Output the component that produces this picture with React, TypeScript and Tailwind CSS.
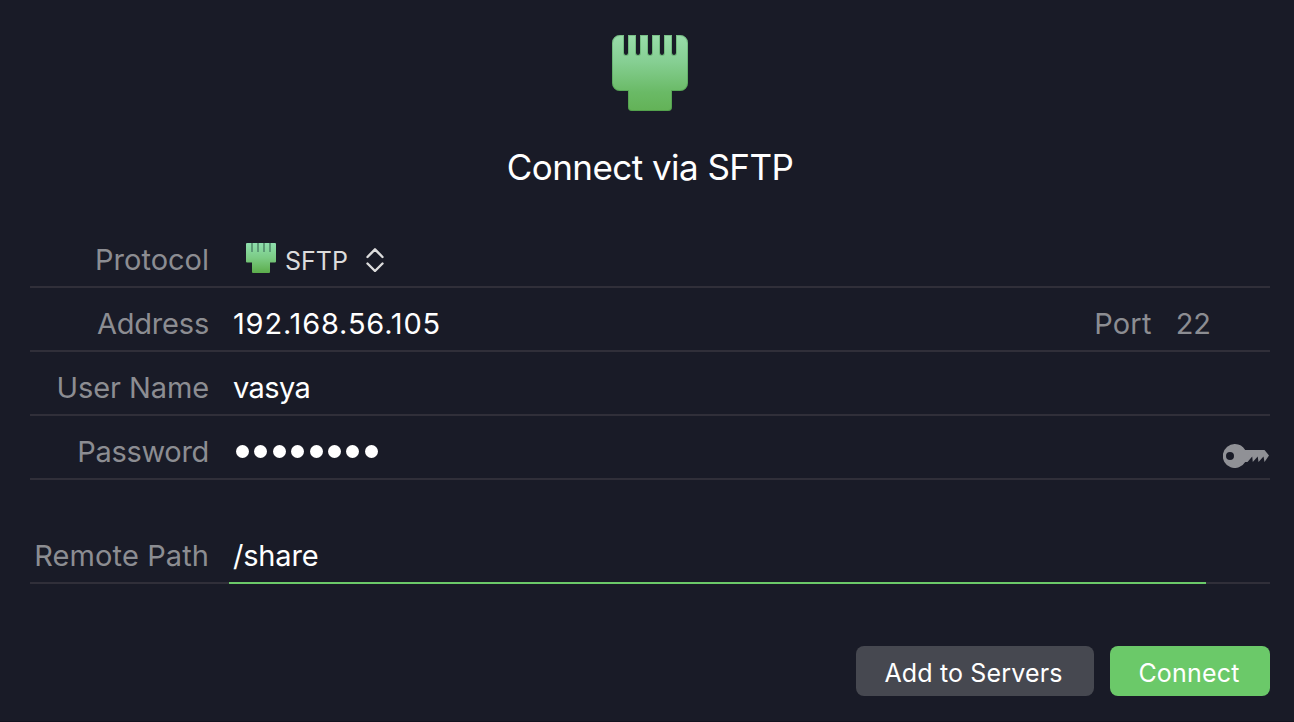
import type { ReactNode } from "react";

function Plug() {
  return (
    <svg className="h-[76px] w-[76px]" viewBox="0 0 76 76">
      <defs>
        <linearGradient id="plug" x1="0" y1="0" x2="0" y2="1">
          <stop offset="0" stopColor="#99dcaa" />
          <stop offset="0.35" stopColor="#86cf93" />
          <stop offset="0.75" stopColor="#6aba66" />
          <stop offset="1" stopColor="#63b257" />
        </linearGradient>
        <clipPath id="plugShape">
          <path id="plugPath" d="M8 0H12V18a2 2 0 0 0 4 0V0H24V18a2 2 0 0 0 4 0V0H36V18a2 2 0 0 0 4 0V0H48V18a2 2 0 0 0 4 0V0H60V18a2 2 0 0 0 4 0V0H68a8 8 0 0 1 8 8V48a8 8 0 0 1-8 8H60V72a4 4 0 0 1-4 4H20a4 4 0 0 1-4-4V56H8a8 8 0 0 1-8-8V8a8 8 0 0 1 8-8Z" />
        </clipPath>
      </defs>
      <g clipPath="url(#plugShape)">
        <rect width="76" height="76" fill="url(#plug)" />
        <use href="#plugPath" fill="none" stroke="#2d7a35" strokeOpacity="0.3" strokeWidth="2" />
      </g>
    </svg>
  );
}

function SmallPlug() {
  return (
    <svg className="-mt-1 h-[30px] w-[30px]" viewBox="0 0 30 30">
      <defs>
        <linearGradient id="smallPlug" x1="0" y1="0" x2="0" y2="1">
          <stop offset="0" stopColor="#8fdfae" />
          <stop offset="0.5" stopColor="#7bcb84" />
          <stop offset="1" stopColor="#5cad4b" />
        </linearGradient>
      </defs>
      <path d="M1 0H29a1 1 0 0 1 1 1V18.500a1 1 0 0 1-1 1H24V29a1 1 0 0 1-1 1H7a1 1 0 0 1-1-1V19.500H1a1 1 0 0 1-1-1V1a1 1 0 0 1 1-1Z" fill="url(#smallPlug)" />
      <path d="M6 0V9M12 0V9M18 0V9M24 0V9" stroke="#5c9b75" strokeWidth="2" />
    </svg>
  );
}

function KeyIcon() {
  return (
    <svg className="h-6 w-[46px]" viewBox="0 0 46 24">
      <path
        fill="#909196"
        fillRule="evenodd"
        d="M12 0a12 12 0 0 1 10.200 6H41.500L46 11.500L41.500 18L40.500 12.500L35.500 18L34.700 12.500L29.800 18L29.200 12.500L24.500 18H22.200A12 12 0 1 1 12 0ZM7 8a4 4 0 1 0 0 8a4 4 0 0 0 0-8Z"
      />
    </svg>
  );
}

function Row({ label, children }: { label: ReactNode; children: ReactNode }) {
  return (
    <div className="flex h-16 items-center border-b-2 border-[#302f39] pt-2.5">
      <div className="w-[179px] shrink-0 text-right text-[#8c8d92]">{label}</div>
      {children}
    </div>
  );
}

export default function App() {
  return (
    <div className="flex h-[722px] w-[1294px] flex-col border-b border-[#12131f] bg-[#191b27] pr-6 pl-[30px] font-['Inter',sans-serif] text-[29px] leading-[36px] whitespace-nowrap text-white">
      <header className="flex flex-col items-center pt-[35px]">
        <Plug />
        <h1 className="mt-9 text-[35px] leading-10 tracking-[-0.55px]">Connect via SFTP</h1>
      </header>

      <div className="mt-[37px]">
        <Row label={<span>Protocol</span>}>
          <div className="ml-[37px] flex items-center">
            <SmallPlug />
            <span className="ml-[9px] w-[63px] pt-0.5 text-[25px] text-[#dcdcdc]">SFTP</span>
            <svg className="ml-[18px] h-6 w-[18px]" viewBox="0 0 18 24" fill="none" stroke="#dcdcdc" strokeWidth="2.400" strokeLinecap="round" strokeLinejoin="round">
              <path d="M1.500 9L9 1.300L16.500 9M1.500 15.500L9 23L16.500 15.500" />
            </svg>
          </div>
        </Row>
        <Row label={<span className="tracking-[-0.2px]">Address</span>}>
          <span className="ml-6 tracking-[0.82px]">192.168.56.105</span>
          <span className="ml-auto tracking-[0.2px] text-[#8c8d92]">Port</span>
          <span className="mr-[59px] ml-6 text-[#8c8d92]">22</span>
        </Row>
        <Row label={<span className="tracking-[-0.1px]">User Name</span>}>
          <span className="ml-6 tracking-[-0.6px]">vasya</span>
        </Row>
        <Row label={<span className="tracking-[-0.3px]">Password</span>}>
          <div className="-mt-px ml-[27px] flex gap-[5.400px]">
            {Array.from({ length: 8 }, (_, i) => (
              <span key={i} className="h-[13px] w-[13px] rounded-full bg-white" />
            ))}
          </div>
          <div className="mt-2 mr-px ml-auto"><KeyIcon /></div>
        </Row>
      </div>

      <div className="mt-10 flex h-16 items-stretch">
        <div className="flex w-[199px] items-center border-b-2 border-[#302f39] pt-2.5 text-[#8c8d92]">
          <span className="w-[179px] text-right tracking-[0.1px]">Remote Path</span>
        </div>
        <div className="flex w-[977px] items-center border-b-2 border-[#6bc969] pt-2.5 pl-1 tracking-[-0.2px]">/share</div>
        <div className="flex-1 border-b-2 border-[#302f39]" />
      </div>

      <div className="mt-[62px] flex justify-end gap-4 text-[25px]">
        <button className="h-[50px] w-[238px] rounded-lg bg-[#464850] pt-1 pr-[3px] tracking-[0.15px]">Add to Servers</button>
        <button className="h-[50px] w-40 rounded-lg bg-[#6bc969] pt-1 pr-0.5 tracking-[0.2px]">Connect</button>
      </div>
    </div>
  );
}
